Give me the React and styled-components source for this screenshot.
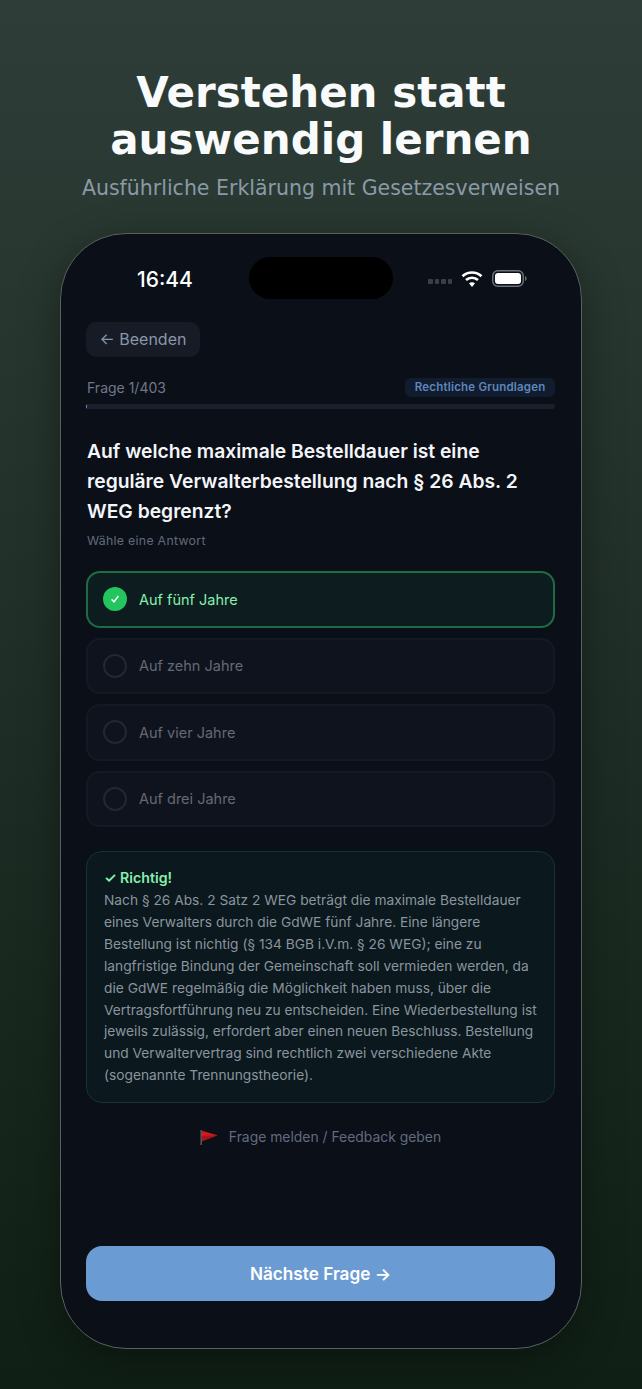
import React from 'react'
import styled, { createGlobalStyle } from 'styled-components'

const GlobalStyle = createGlobalStyle`
  html, body {
    margin: 0;
    padding: 0;
    background: #0f1f15;
  }
  * {
    box-sizing: border-box;
  }
`

const answers = [
  { text: 'Auf fünf Jahre', correct: true },
  { text: 'Auf zehn Jahre' },
  { text: 'Auf vier Jahre' },
  { text: 'Auf drei Jahre' },
]

const explanation =
  'Nach § 26 Abs. 2 Satz 2 WEG beträgt die maximale Bestelldauer eines Verwalters durch die GdWE fünf Jahre. Eine längere Bestellung ist nichtig (§ 134 BGB i.V.m. § 26 WEG); eine zu langfristige Bindung der Gemeinschaft soll vermieden werden, da die GdWE regelmäßig die Möglichkeit haben muss, über die Vertragsfortführung neu zu entscheiden. Eine Wiederbestellung ist jeweils zulässig, erfordert aber einen neuen Beschluss. Bestellung und Verwaltervertrag sind rechtlich zwei verschiedene Akte (sogenannte Trennungstheorie).'

const WifiIcon = () => (
  <svg width="22" height="18" viewBox="0 0 22 18" fill="none">
    <path d="M1.5 6.2C6.8 1.2 15.2 1.2 20.5 6.2" stroke="#fff" strokeWidth="2.6" />
    <path d="M5 10C8.4 6.9 13.6 6.9 17 10" stroke="#fff" strokeWidth="2.6" />
    <path d="M8 13.2L11 17L14 13.2C12.2 11.8 9.8 11.8 8 13.2Z" fill="#fff" />
  </svg>
)

const BatteryIcon = () => (
  <svg width="35" height="17" viewBox="0 0 35 17" fill="none">
    <rect x="0.75" y="0.75" width="30.5" height="15.5" rx="5" stroke="#6b6f78" strokeWidth="1.5" />
    <rect x="3" y="3" width="26" height="11" rx="3" fill="#fff" />
    <path d="M33 6V11C34.2 10.6 34.6 9.6 34.6 8.5C34.6 7.4 34.2 6.4 33 6Z" fill="#6b6f78" />
  </svg>
)

const FlagIcon = () => (
  <svg width="18" height="15" viewBox="0 0 18 15" fill="none">
    <rect x="0.5" y="0" width="1.4" height="15" fill="#5a5f68" />
    <path d="M1.9 0.8L17.5 5.2L1.9 11.2Z" fill="#d3191e" />
    <path d="M1.9 6L17.5 5.2L1.9 11.2Z" fill="#a5151a" />
  </svg>
)

const App = () => (
  <Page>
    <GlobalStyle />
    <Header>
      <Title>Verstehen statt<br />auswendig lernen</Title>
      <Subtitle>Ausführliche Erklärung mit Gesetzesverweisen</Subtitle>
    </Header>
    <Phone>
      <StatusBar>
        <Clock>16:44</Clock>
        <Island />
        <StatusIcons>
          <Signal>
            <i /><i /><i /><i />
          </Signal>
          <WifiIcon />
          <BatteryIcon />
        </StatusIcons>
      </StatusBar>
      <Screen>
        <BackButton>← Beenden</BackButton>
        <MetaRow>
          <Counter>Frage 1/403</Counter>
          <Badge>Rechtliche Grundlagen</Badge>
        </MetaRow>
        <Progress>
          <ProgressFill style={{ width: `${(1 / 403) * 100}%` }} />
        </Progress>
        <Question>Auf welche maximale Bestelldauer ist eine reguläre Verwalterbestellung nach § 26 Abs. 2 WEG begrenzt?</Question>
        <Hint>Wähle eine Antwort</Hint>
        <AnswerList>
          {answers.map(answer => (
            <Answer key={answer.text} $correct={answer.correct}>
              <Radio $correct={answer.correct}>
                {answer.correct && (
                  <svg width="12" height="12" viewBox="0 0 12 12" fill="none">
                    <path d="M2.6 6.4L5 8.8L9.4 3" stroke="#fff" strokeWidth="1.5" />
                  </svg>
                )}
              </Radio>
              <AnswerText $correct={answer.correct}>{answer.text}</AnswerText>
            </Answer>
          ))}
        </AnswerList>
        <Explanation>
          <ExplanationTitle>✓ Richtig!</ExplanationTitle>
          <ExplanationText>{explanation}</ExplanationText>
        </Explanation>
        <Report>
          <FlagIcon />
          <span>Frage melden / Feedback geben</span>
        </Report>
        <NextButton>Nächste Frage →</NextButton>
      </Screen>
    </Phone>
  </Page>
)

export default App

const Page = styled.div`
  width: 642px;
  height: 1389px;
  overflow: hidden;
  padding-top: 69px;
  background: linear-gradient(180deg, #2e3d37 0%, #0f1f15 100%);
  display: flex;
  flex-direction: column;
  align-items: center;
`

const Header = styled.header`
  text-align: center;
  font-family: "DejaVu Sans", sans-serif;
`

const Title = styled.h1`
  margin: 0;
  font-size: 42px;
  line-height: 47px;
  font-weight: 700;
  color: #f8fafb;
`

const Subtitle = styled.p`
  margin: 11px 0 0;
  font-size: 20.5px;
  line-height: 28px;
  color: #8a9aa6;
`

const Phone = styled.div`
  width: 522px;
  height: 1116px;
  margin-top: 31px;
  align-self: flex-start;
  margin-left: 60px;
  border: 1px solid #5c5f60;
  border-radius: 66px;
  background: #0b0f18;
  box-shadow: 0 10px 40px rgba(0, 0, 0, 0.35);
  display: flex;
  flex-direction: column;
  font-family: Inter, sans-serif;
`

const StatusBar = styled.div`
  display: grid;
  grid-template-columns: 1fr 144px 1fr;
  align-items: center;
  padding-top: 21px;
  height: 88px;
  align-content: start;
`

const Clock = styled.div`
  font-size: 21px;
  line-height: 42px;
  font-weight: 500;
  color: #fff;
  padding-left: 76px;
  margin-top: 4px;
`

const Island = styled.div`
  height: 42px;
  border-radius: 21px;
  background: #000;
`

const StatusIcons = styled.div`
  display: flex;
  align-items: center;
  justify-content: flex-end;
  gap: 9px;
  padding: 1px 54px 0 0;
  height: 42px;
`

const Signal = styled.div`
  display: flex;
  gap: 2px;
  margin-top: 6px;
  i {
    width: 4.5px;
    height: 4.5px;
    background: #3a3e47;
    border-radius: 1px;
  }
`

const Screen = styled.div`
  flex: 1;
  display: flex;
  flex-direction: column;
  padding: 0 26px 47px 25px;
`

const BackButton = styled.button`
  align-self: flex-start;
  height: 35px;
  padding: 0 13.5px 1px;
  border: 0;
  border-radius: 10px;
  background: #161b26;
  color: #8b96a9;
  font-family: Inter, sans-serif;
  font-size: 16px;
  font-weight: 400;
`

const MetaRow = styled.div`
  display: flex;
  justify-content: space-between;
  align-items: center;
  margin-top: 21px;
  height: 19px;
`

const Counter = styled.span`
  padding-left: 1px;
  font-size: 14px;
  color: #6f7789;
`

const Badge = styled.span`
  height: 19px;
  line-height: 19px;
  padding: 0 9.5px;
  border-radius: 6px;
  background: #111c2e;
  color: #5e86ba;
  font-size: 11.5px;
  font-weight: 600;
  letter-spacing: 0.2px;
`

const Progress = styled.div`
  height: 5px;
  margin-top: 7px;
  border-radius: 3px;
  background: #1a1f2b;
  overflow: hidden;
`

const ProgressFill = styled.div`
  height: 100%;
  background: #6b9bd3;
`

const Question = styled.h2`
  margin: 27px 0 0;
  padding-left: 1px;
  max-width: 445px;
  font-size: 19.3px;
  line-height: 30px;
  font-weight: 600;
  color: #f3f5f8;
`

const Hint = styled.div`
  margin-top: 7px;
  padding-left: 1px;
  font-size: 12.3px;
  line-height: 16px;
  color: #626a7b;
  letter-spacing: 0.3px;
`

const AnswerList = styled.div`
  display: flex;
  flex-direction: column;
  gap: 10px;
  margin-top: 22px;
`

const Answer = styled.div`
  height: 56.5px;
  display: flex;
  align-items: center;
  gap: 12px;
  padding: 0 15px;
  border-radius: 14px;
  border: 2px solid ${p => (p.$correct ? '#1f6b44' : '#141924')};
  background: ${p => (p.$correct ? '#0d1c1e' : '#0f131d')};
`

const Radio = styled.div`
  width: 24px;
  height: 24px;
  flex-shrink: 0;
  border-radius: 50%;
  display: flex;
  align-items: center;
  justify-content: center;
  border: ${p => (p.$correct ? '0' : '2px solid #222733')};
  background: ${p => (p.$correct ? '#22c55e' : 'transparent')};
`

const AnswerText = styled.span`
  font-size: 14.5px;
  color: ${p => (p.$correct ? '#86efac' : '#636975')};
`

const Explanation = styled.section`
  margin-top: 24px;
  height: 252px;
  padding: 15px 17px;
  border-radius: 16px;
  border: 1px solid #14352d;
  background: #0b181d;
`

const ExplanationTitle = styled.div`
  font-size: 14.2px;
  line-height: 21px;
  font-weight: 600;
  color: #86efac;
`

const ExplanationText = styled.p`
  margin: 2px 0 0;
  font-size: 13.75px;
  line-height: 21.9px;
  color: #8a949f;
`

const Report = styled.div`
  display: flex;
  align-items: center;
  justify-content: center;
  gap: 11px;
  margin-top: 26px;
  font-size: 13.9px;
  color: #626a80;
`

const NextButton = styled.button`
  margin-top: auto;
  height: 55px;
  border: 0;
  border-radius: 16px;
  background: #6b9bd3;
  color: #fff;
  font-family: Inter, sans-serif;
  font-size: 17.2px;
  font-weight: 600;
`
